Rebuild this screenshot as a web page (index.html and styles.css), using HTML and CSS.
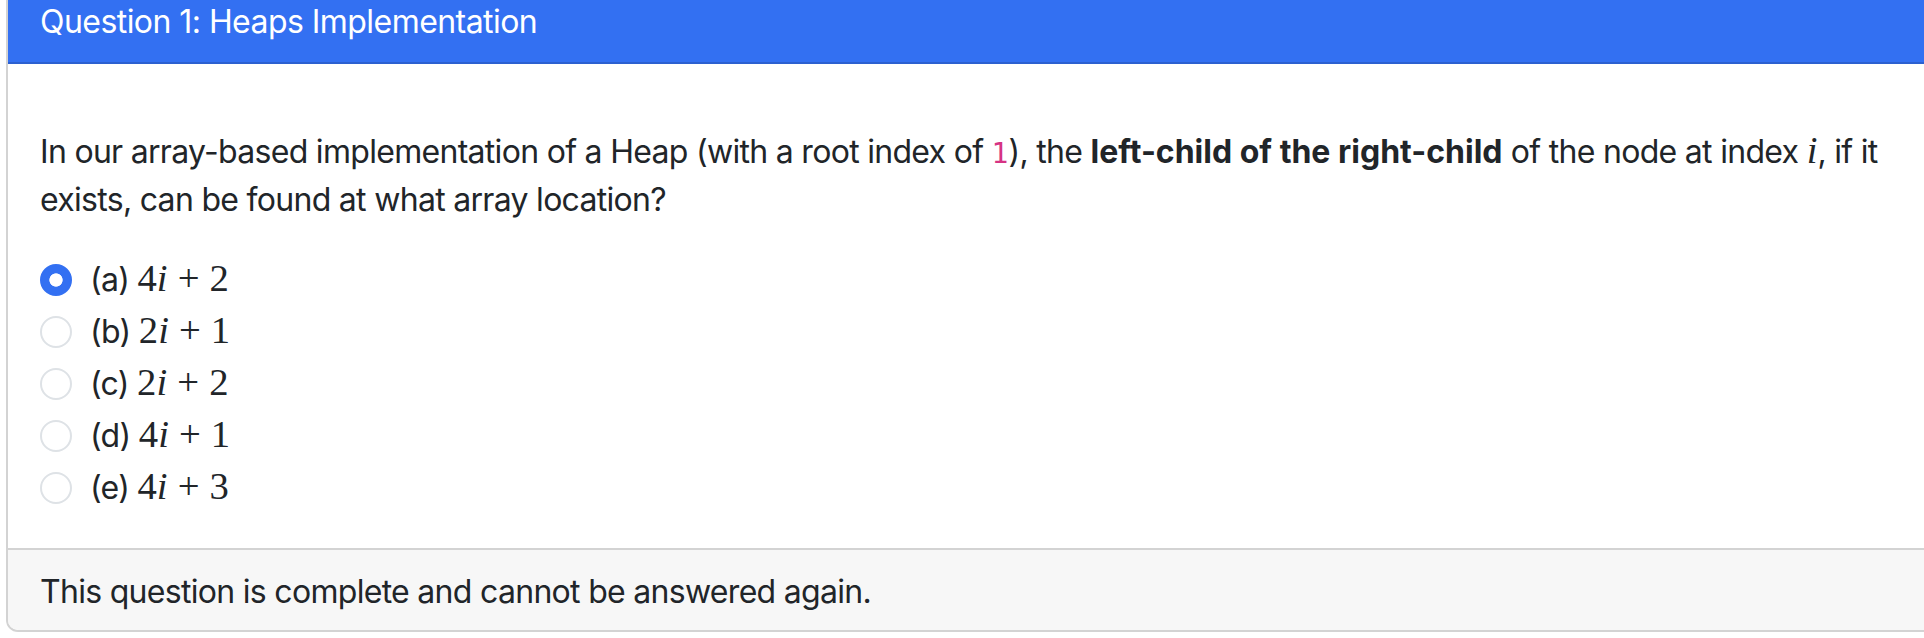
FILE: index.html
```html
<!DOCTYPE html>
<html lang="en">
<head>
<meta charset="utf-8">
<title>Question 1: Heaps Implementation</title>
<link rel="stylesheet" href="styles.css">
</head>
<body>
<div class="page">
  <div class="card">
    <div class="card-header">Question 1: Heaps Implementation</div>
    <div class="card-body">
      <p class="question">In our array-based implementation of a Heap (with a root index of <code>1</code>), the <strong>left-child of the right-child</strong> of the node at index <span class="math"><span class="mi">i</span></span>, if it exists, can be found at what array location?</p>
      <div class="options">
        <div class="option"><span class="radio checked"></span><span class="label">(a) <span class="math"><span class="mn">4</span><span class="mi">i</span><span class="mo">+</span><span class="mn">2</span></span></span></div>
        <div class="option"><span class="radio"></span><span class="label">(b) <span class="math"><span class="mn">2</span><span class="mi">i</span><span class="mo">+</span><span class="mn">1</span></span></span></div>
        <div class="option"><span class="radio"></span><span class="label">(c) <span class="math"><span class="mn">2</span><span class="mi">i</span><span class="mo">+</span><span class="mn">2</span></span></span></div>
        <div class="option"><span class="radio"></span><span class="label">(d) <span class="math"><span class="mn">4</span><span class="mi">i</span><span class="mo">+</span><span class="mn">1</span></span></span></div>
        <div class="option"><span class="radio"></span><span class="label">(e) <span class="math"><span class="mn">4</span><span class="mi">i</span><span class="mo">+</span><span class="mn">3</span></span></span></div>
      </div>
    </div>
    <div class="card-footer">This question is complete and cannot be answered again.</div>
  </div>
</div>
</body>
</html>
```

FILE: styles.css
```css
html, body {
  margin: 0;
  padding: 0;
  overflow: hidden;
  background: #ffffff;
}

body {
  font-family: Inter, "Liberation Sans", sans-serif;
  font-size: 32px;
  line-height: 48px;
  letter-spacing: -0.7px;
  color: #212529;
}

.page {
  padding-left: 6px;
}

.card {
  width: 1930px;
  margin-top: -20px;
  border: 2px solid #d3d3d3;
  border-radius: 12px;
  overflow: hidden;
  background: #ffffff;
}

.card-header {
  background: #3370f2;
  color: #ffffff;
  padding: 16px 32px;
  border-bottom: 2px solid #2c60d0;
  letter-spacing: -0.55px;
}

.card-body {
  padding: 64px 32px 32px;
}

.question {
  margin: 0 0 32px;
}

.question code {
  font-family: "DejaVu Sans Mono", "Liberation Mono", monospace;
  font-size: 28px;
  line-height: 1;
  letter-spacing: 0;
  color: #d63384;
}

.question strong {
  font-weight: 700;
  letter-spacing: 0;
}

.math {
  font-family: "Liberation Serif", "DejaVu Serif", serif;
  font-size: 38.7px;
  line-height: 1;
  letter-spacing: 0;
}

.mi {
  font-style: italic;
}

.mo {
  margin: 0 0.26em;
}

.options {
  display: flex;
  flex-direction: column;
}

.option {
  display: flex;
  align-items: center;
  height: 48px;
  margin-bottom: 4px;
}

.label {
  line-height: 48px;
}

.radio {
  flex: none;
  width: 32px;
  height: 32px;
  box-sizing: border-box;
  border-radius: 50%;
  border: 2px solid #dee2e6;
  background: #ffffff;
  margin-right: 18px;
}

.radio.checked {
  border-color: #3370f2;
  background: radial-gradient(circle, #ffffff 6.3px, #3370f2 7px);
}

.card-footer {
  background: #f7f7f7;
  border-top: 2px solid #d3d3d3;
  padding: 18px 32px 14px;
}
```
